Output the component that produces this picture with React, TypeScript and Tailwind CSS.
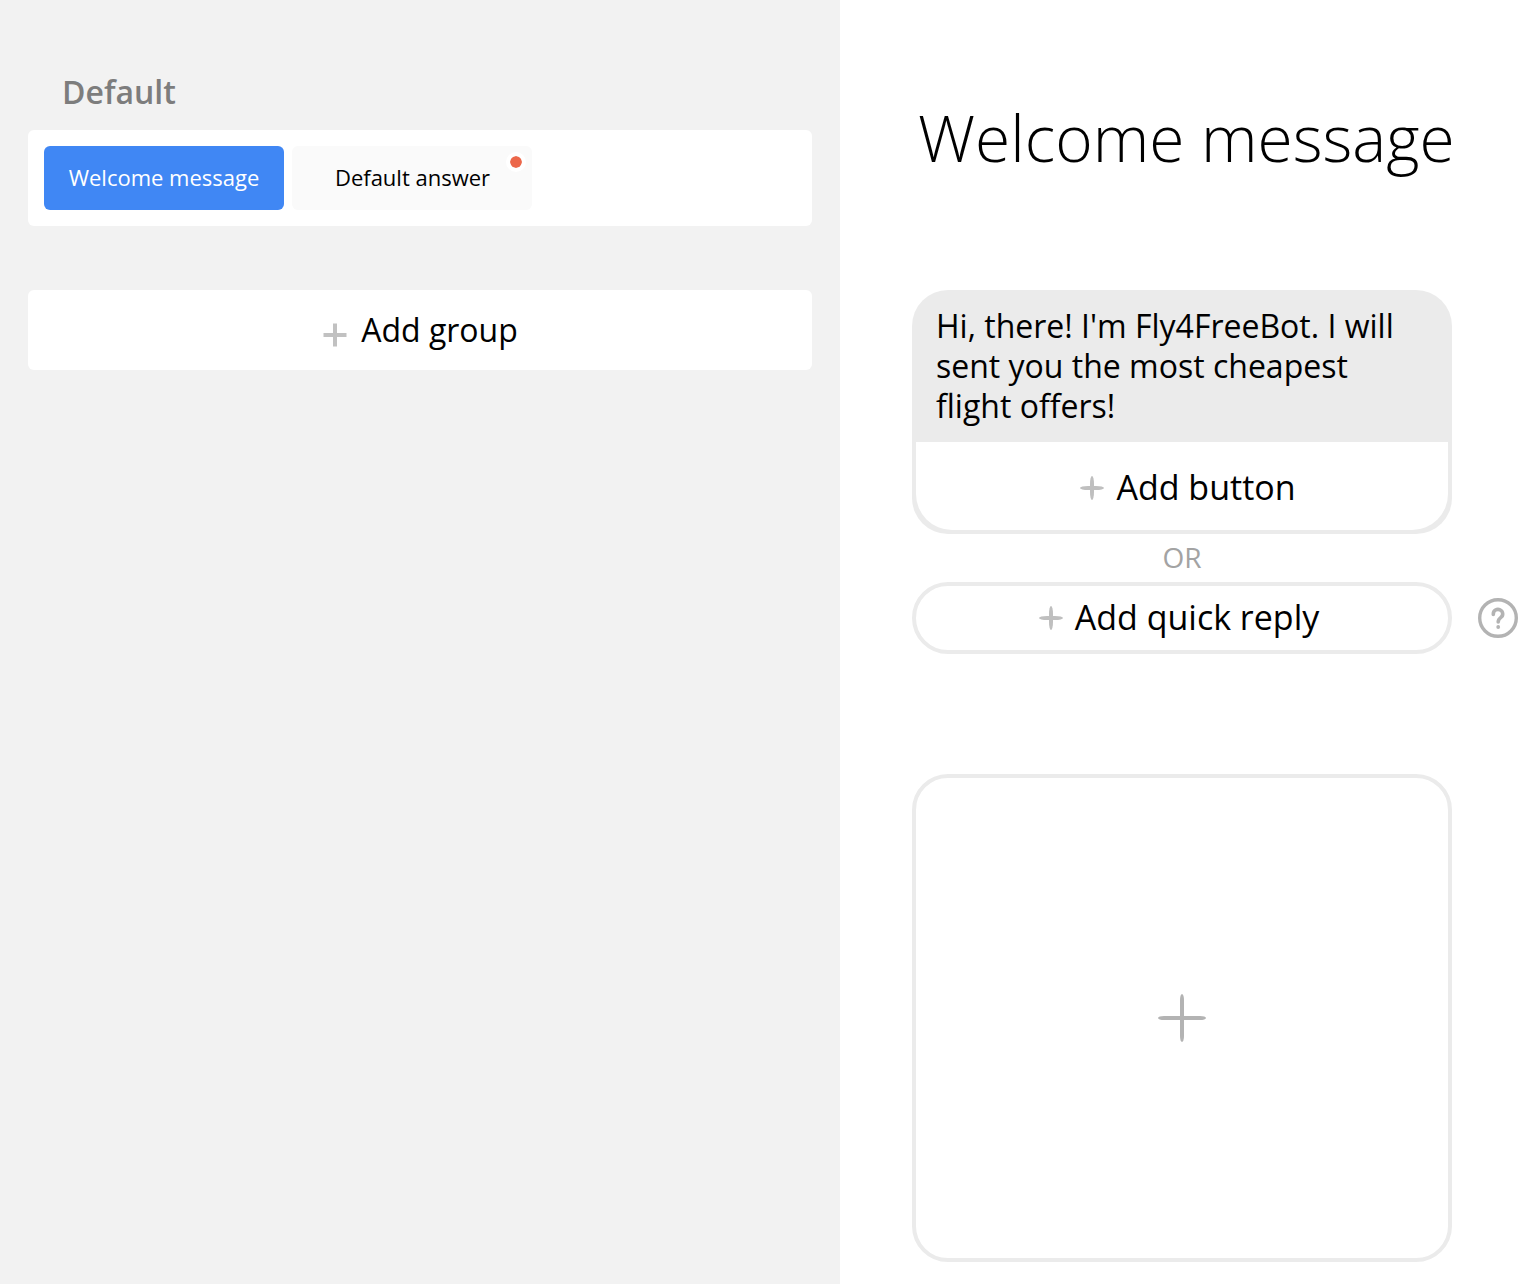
import React from "react";

function Plus({ className, thin }: { className: string; thin?: boolean }) {
  return (
    <svg viewBox="0 0 24 24" className={className} fill={thin ? "#b3b3b3" : "#bfbfbf"}>
      <rect x="0" y={thin ? 11 : 10} width="24" height={thin ? 2 : 4} rx={thin ? 3 : 8} />
      <rect x={thin ? 11 : 10} y="0" width={thin ? 2 : 4} height="24" ry={thin ? 3 : 8} />
    </svg>
  );
}

export default function App() {
  return (
    <div className="flex h-[1284px] w-[1524px] overflow-hidden bg-white font-['Open_Sans',sans-serif] text-black">
      <aside className="w-[840px] shrink-0 bg-[#f2f2f2] px-7 pt-[68px]">
        <h2 className="h-[62px] pl-[34px] text-[32px] leading-[48px] font-semibold text-[#7d7d7d]">Default</h2>
        <div className="flex h-24 gap-2 rounded-md bg-white p-4">
          <button className="h-16 w-60 rounded-md bg-[#4087f4] pb-0.5 text-[22px] text-white">Welcome message</button>
          <button className="relative h-16 w-60 rounded-md bg-[#fafafa] pb-0.5 pl-px text-[22px]">
            Default answer
            <span className="absolute top-1.5 right-1.5 size-5 rounded-full border-4 border-white bg-[#ec674a] bg-clip-padding" />
          </button>
        </div>
        <button className="mt-16 flex h-20 w-full items-center justify-center rounded-md bg-white pl-px text-[32px]">
          <svg viewBox="0 0 24 24" className="mt-2.5 mr-[14px] size-6" fill="#c1c1c1">
            <path d="M10 .5h4V10h9.500v4H14v9.500h-4V14H.5v-4H10z" />
          </svg>
          Add group
        </button>
      </aside>
      <main className="w-[684px] shrink-0 pl-[72px]">
        <h1 className="mt-[88px] ml-1.5 h-[202px] text-[64px] leading-[100px] font-light whitespace-nowrap">Welcome message</h1>
        <section className="h-[244px] w-[540px] rounded-[36px] bg-[#ebebeb] px-1 pb-1">
          <p className="h-[152px] px-5 pt-4 text-[32px] leading-10">
            Hi, there! I'm Fly4FreeBot. I will<br />sent you the most cheapest<br />flight offers!
          </p>
          <button className="flex h-[88px] w-full items-center justify-center gap-3 rounded-b-[36px] bg-white pt-0.5 pl-3 text-[34px]">
            <Plus className="mt-0.5 size-6" />
            Add button
          </button>
        </section>
        <div className="h-12 w-[540px] text-center text-[28px] leading-[46px] text-[#a3a3a3]">OR</div>
        <div className="flex items-center gap-[26px]">
          <button className="flex h-[72px] w-[540px] items-center justify-center gap-3 rounded-full border-4 border-[#ebebeb] pr-1.5 pb-0.5 text-[34px]">
            <Plus className="mt-0.5 size-6" />
            Add quick reply
          </button>
          <svg viewBox="0 0 40 40" className="size-10" fill="none" stroke="#b3b3b3">
            <circle cx="20" cy="20" r="18.3" strokeWidth="3.4" />
            <path d="M15.300 16.500v-.6a4.700 4.500 0 1 1 7.600 3.500Q20.200 21.500 20.200 24" strokeWidth="3.600" strokeLinecap="round" />
            <circle cx="20.200" cy="29" r="1.900" fill="#b3b3b3" stroke="none" />
          </svg>
        </div>
        <button className="mt-[120px] flex h-[488px] w-[540px] items-center justify-center rounded-[36px] border-4 border-[#ebebeb]">
          <Plus className="size-12" thin />
        </button>
      </main>
    </div>
  );
}
